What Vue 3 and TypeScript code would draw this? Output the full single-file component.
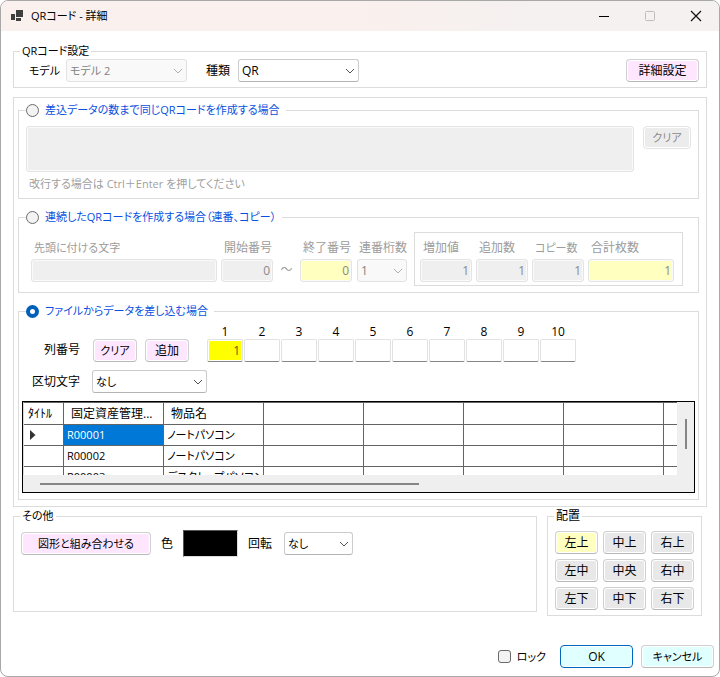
<script setup lang="ts">
import { ref } from 'vue'

interface CountField {
  id: string
  label: string
  value: string
  size: string
}

const mode = ref<string>('file')
const locked = ref<boolean>(false)
const position = ref<string>('左上')

const positions: string[] = ['左上', '中上', '右上', '左中', '中央', '右中', '左下', '中下', '右下']

const columnNumbers = ref<string[]>(['1', '', '', '', '', '', '', '', '', ''])

const countFields: CountField[] = [
  { id: 'step', label: '増加値', value: '1', size: 'short' },
  { id: 'extra', label: '追加数', value: '1', size: 'short' },
  { id: 'copies', label: 'コピー数', value: '1', size: 'short kana' },
  { id: 'total', label: '合計枚数', value: '1', size: 'total yellow' },
]

const headers: string[] = ['固定資産管理...', '物品名', '', '', '', '', '']
const rows: string[][] = [
  ['R00001', 'ノートパソコン', '', '', '', '', ''],
  ['R00002', 'ノートパソコン', '', '', '', '', ''],
  ['R00003', 'デスクトップパソコン', '', '', '', '', ''],
]
</script>

<template>
  <div class="window">
    <header class="titlebar">
      <svg class="app-icon" width="13" height="12" viewBox="0 0 13 12" aria-hidden="true">
        <path d="M5 0h7v7H5zM0 4h4v6H0zM5 8h5v3H5z" fill="#3f3f3f" />
      </svg>
      <h1>QRコード - 詳細</h1>
      <button class="caption" type="button" aria-label="最小化">
        <svg width="12" height="12" viewBox="0 0 12 12"><path d="M1 6.500h10" stroke="#000" /></svg>
      </button>
      <button class="caption" type="button" aria-label="最大化" disabled>
        <svg width="12" height="12" viewBox="0 0 12 12"><rect x="1.5" y="1.5" width="9" height="9" rx="1" fill="none" stroke="#bdbdbd" /></svg>
      </button>
      <button class="caption" type="button" aria-label="閉じる">
        <svg width="12" height="12" viewBox="0 0 12 12"><path d="M1 1l10 10M11 1L1 11" stroke="#111" stroke-width="1.2" /></svg>
      </button>
    </header>

    <main class="content">
      <fieldset class="group settings">
        <legend>QRコード設定</legend>
        <div class="settings-row">
          <label for="model" class="kana">モデル</label>
          <div class="select model kana">
            <select id="model" disabled><option>モデル 2</option></select>
            <svg width="10" height="6" viewBox="0 0 10 6"><path d="M1 1l4 4 4-4" /></svg>
          </div>
          <label for="kind" class="kind-label">種類</label>
          <div class="select model">
            <select id="kind"><option>QR</option></select>
            <svg width="10" height="6" viewBox="0 0 10 6"><path d="M1 1l4 4 4-4" /></svg>
          </div>
          <button type="button" class="btn pink detail">詳細設定</button>
        </div>
      </fieldset>

      <section class="panel">
        <fieldset class="group same">
          <legend class="choice">
            <input id="mode-same" v-model="mode" type="radio" name="mode" value="same" />
            <label for="mode-same">差込データの数まで同じQRコードを作成する場合</label>
          </legend>
          <div class="same-row">
            <textarea disabled aria-label="差込データ"></textarea>
            <button type="button" class="btn clear kana" disabled>クリア</button>
          </div>
          <p class="hint kana">改行する場合は Ctrl＋Enter を押してください</p>
        </fieldset>

        <fieldset class="group serial">
          <legend class="choice">
            <input id="mode-serial" v-model="mode" type="radio" name="mode" value="serial" />
            <label for="mode-serial">連続したQRコードを作成する場合（連番、コピー）</label>
          </legend>
          <div class="serial-row">
            <div class="field prefix kana">
              <label for="prefix">先頭に付ける文字</label>
              <input id="prefix" type="text" disabled />
            </div>
            <div class="field short">
              <label for="start">開始番号</label>
              <input id="start" type="text" value="0" disabled />
            </div>
            <span class="tilde">～</span>
            <div class="field short yellow">
              <label for="end">終了番号</label>
              <input id="end" type="text" value="0" disabled />
            </div>
            <div class="field digits">
              <label for="digits">連番桁数</label>
              <div class="select">
                <select id="digits" disabled><option>1</option></select>
                <svg width="10" height="6" viewBox="0 0 10 6"><path d="M1 1l4 4 4-4" /></svg>
              </div>
            </div>
            <div class="counts">
              <div v-for="f in countFields" :key="f.id" class="field" :class="f.size">
                <label :for="f.id">{{ f.label }}</label>
                <input :id="f.id" type="text" :value="f.value" disabled />
              </div>
            </div>
          </div>
        </fieldset>

        <fieldset class="group file">
          <legend class="choice">
            <input id="mode-file" v-model="mode" type="radio" name="mode" value="file" />
            <label for="mode-file">ファイルからデータを差し込む場合</label>
          </legend>
          <div class="columns-row">
            <span class="row-name">列番号</span>
            <button type="button" class="btn pink small kana">クリア</button>
            <button type="button" class="btn pink small">追加</button>
            <div class="numbers">
              <label v-for="(_, i) in columnNumbers" :key="i" class="number">
                <span>{{ i + 1 }}</span>
                <input v-model="columnNumbers[i]" type="text" :class="{ filled: columnNumbers[i] !== '' }" />
              </label>
            </div>
          </div>
          <div class="delimiter-row">
            <label for="delimiter" class="row-name">区切文字</label>
            <div class="select delimiter kana">
              <select id="delimiter"><option>なし</option></select>
              <svg width="10" height="6" viewBox="0 0 10 6"><path d="M1 1l4 4 4-4" /></svg>
            </div>
          </div>
          <div class="grid-box">
            <div class="grid-view">
              <table>
                <colgroup>
                  <col class="col-title" />
                  <col v-for="n in headers.length" :key="n" class="col-data" />
                </colgroup>
                <thead>
                  <tr>
                    <th class="corner">ﾀｲﾄﾙ</th>
                    <th v-for="(h, i) in headers" :key="i">{{ h }}</th>
                  </tr>
                </thead>
                <tbody>
                  <tr v-for="(row, r) in rows" :key="r">
                    <td class="marker">
                      <svg v-if="r === 0" width="6" height="10" viewBox="0 0 6 10"><path d="M0 0l5.500 5L0 10z" fill="#333" /></svg>
                    </td>
                    <td v-for="(cell, c) in row" :key="c" :class="{ selected: r === 0 && c === 0 }">{{ cell }}</td>
                  </tr>
                </tbody>
              </table>
            </div>
            <div class="bar-v"><i></i></div>
            <div class="bar-h"><i></i></div>
          </div>
        </fieldset>
      </section>

      <div class="bottom">
        <fieldset class="group other">
          <legend>その他</legend>
          <div class="other-row">
            <button type="button" class="btn pink combine kana">図形と組み合わせる</button>
            <label for="color">色</label>
            <button id="color" type="button" class="swatch" aria-label="色"></button>
            <label for="rotate">回転</label>
            <div class="select rotate kana">
              <select id="rotate"><option>なし</option></select>
              <svg width="10" height="6" viewBox="0 0 10 6"><path d="M1 1l4 4 4-4" /></svg>
            </div>
          </div>
        </fieldset>

        <fieldset class="group place">
          <legend class="wide">配置</legend>
          <div class="place-grid">
            <button
              v-for="p in positions"
              :key="p"
              type="button"
              class="btn gray"
              :class="{ active: p === position }"
              @click="position = p"
            >{{ p }}</button>
          </div>
        </fieldset>
      </div>
    </main>

    <footer class="footer">
      <input id="lock" v-model="locked" type="checkbox" />
      <label for="lock" class="kana">ロック</label>
      <button type="button" class="btn cyan ok">OK</button>
      <button type="button" class="btn cyan kana">キャンセル</button>
    </footer>
  </div>
</template>

<style>
body {
  margin: 0;
  background: #fff;
}
</style>

<style scoped>
* {
  box-sizing: border-box;
}

.window {
  display: flex;
  flex-direction: column;
  min-height: 100vh;
  border: 1px solid #a8a8a8;
  border-radius: 8px;
  overflow: hidden;
  background: #fff;
  color: #000;
  font-family: "Open Sans", "Noto Sans CJK JP", sans-serif;
  font-size: 12px;
  line-height: 16px;
  font-feature-settings: "palt";
  white-space: nowrap;
}

button,
input,
select,
textarea {
  margin: 0;
  color: inherit;
  font: inherit;
  font-feature-settings: inherit;
}

.kana {
  font-size: 11px;
}

.titlebar {
  display: flex;
  align-items: center;
  height: 30px;
  padding-left: 10px;
  background: linear-gradient(90deg, #faf0ed 0%, #faf0ed 50%, #f4f1f0 75%, #f4f1f0 100%);
}

.app-icon {
  margin-right: 7px;
}

h1 {
  flex: 1;
  margin: 0;
  font-size: 11px;
  font-weight: 400;
}

.caption {
  display: grid;
  place-items: center;
  width: 46px;
  height: 28px;
  padding: 0;
  border: 0;
  background: none;
}

.content {
  padding: 13px 12px 0;
}

.group {
  min-width: 0;
  margin: 0;
  padding: 0;
  border: 1px solid #dcdcdc;
}

legend {
  height: 14px;
  margin-left: 6px;
  padding: 0 2px;
  font-size: 11px;
  line-height: 14px;
}

legend.wide {
  font-size: 12px;
}

.settings-row {
  display: flex;
  align-items: center;
  padding: 1px 7px 5px 15px;
}

.settings-row label {
  width: 37px;
}

.settings-row .kind-label {
  width: 32px;
  margin-left: 19px;
}

.model {
  width: 121px;
}

.detail {
  width: 73px;
  margin-left: auto;
}

.select {
  display: grid;
  align-items: center;
  height: 23px;
}

.select select {
  grid-area: 1 / 1;
  width: 100%;
  height: 23px;
  padding: 0 20px 0 3px;
  border: 1px solid #ccc;
  border-bottom-color: #b4b4b4;
  border-radius: 3px;
  background: #fff;
  appearance: none;
}

.select svg {
  grid-area: 1 / 1;
  justify-self: end;
  margin-right: 4px;
  fill: none;
  stroke: #505050;
  pointer-events: none;
}

.select select:disabled {
  border-color: #e2e2e2;
  background: #f9f9f9;
  color: #838383;
  opacity: 1;
}

.select select:disabled + svg {
  stroke: #b0b0b0;
}

.btn {
  height: 23px;
  padding: 0;
  border: 1px solid #d0d0d0;
  border-bottom-color: #b8b8b8;
  border-radius: 4px;
  background: #e8e8e8;
  box-shadow: inset 0 0 0 1px #fff;
  text-align: center;
}

.btn.pink {
  background: #ffe6ff;
}

.btn.cyan {
  width: 73px;
  background: #e0ffff;
}

.btn.active {
  background: #ffffc0;
}

.btn:disabled {
  border-color: #e4e4e4;
  background: #ececec;
  color: #8a8a8a;
}

.btn.ok {
  border-color: #0067c0;
}

.panel {
  display: flex;
  flex-direction: column;
  gap: 11px;
  margin-top: 9px;
  padding: 5px 7px 6px 4px;
  border: 1px solid #dcdcdc;
}

.choice {
  display: flex;
  align-items: center;
  gap: 6px;
  margin-left: 7px;
  padding: 0 6px 0 0;
  color: #0a50e0;
}

input[type="radio"] {
  width: 13px;
  height: 13px;
  border: 1px solid #6a6a6a;
  border-radius: 50%;
  background: #f3f3f3;
  appearance: none;
}

input[type="radio"]:checked {
  border: 4px solid #005fb8;
  background: #fff;
}

.same-row {
  display: flex;
  align-items: flex-start;
  gap: 9px;
  padding: 9px 7px 0;
}

textarea {
  flex: 1;
  height: 46px;
  border: 1px solid #e4e4e4;
  border-radius: 3px;
  background: #efefef;
  resize: none;
  box-shadow: inset 0 0 0 1px #fafafa;
}

.clear {
  width: 48px;
}

.hint {
  margin: 4px 0 6px 10px;
  color: #a0a0a0;
}

.serial-row {
  display: flex;
  align-items: flex-end;
  gap: 4px;
  padding: 8px 15px 6px 12px;
  color: #9c9c9c;
}

.field {
  display: flex;
  flex-direction: column;
  gap: 3px;
}

.field label {
  padding-left: 3px;
}

.field input {
  width: 100%;
  height: 23px;
  padding: 0 2px;
  border: 1px solid #e4e4e4;
  border-radius: 3px;
  background: #efefef;
  box-shadow: inset 0 0 0 1px #fafafa;
  color: #8a8a8a;
  font-size: 12px;
  text-align: right;
}

.field.yellow input {
  background: #ffffc0;
}

.serial-row > .field {
  margin-bottom: 4px;
}

.prefix {
  flex: 1;
}

.short {
  width: 52px;
}

.digits {
  width: 50px;
  margin-left: 1px;
}

.digits label {
  padding-left: 2px;
}

.total {
  width: 86px;
}

.tilde {
  width: 19px;
  margin-bottom: 8px;
  text-align: center;
}

.counts {
  display: flex;
  gap: 4px;
  margin-left: 3px;
  padding: 7px 8px 3px 5px;
  border: 1px solid #dcdcdc;
}

.columns-row {
  display: flex;
  align-items: flex-end;
  gap: 8px;
  padding: 7px 0 0 13px;
}

.row-name {
  width: 48px;
  text-align: right;
}

.columns-row .row-name {
  margin-bottom: 4px;
}

.small {
  width: 44px;
}

.columns-row .row-name + .small {
  margin-left: 5px;
}

.numbers {
  display: flex;
  gap: 1px;
  margin-left: 10px;
}

.number {
  display: flex;
  flex-direction: column;
  width: 36px;
  line-height: 14px;
  text-align: center;
}

.number input {
  width: 100%;
  height: 23px;
  padding: 0 2px;
  border: 1px solid #e2e2e2;
  border-bottom-color: #868686;
  border-radius: 2px;
  background: #fff;
  box-shadow: inset 0 0 0 1px #fff;
  text-align: right;
}

.number .filled {
  background: #ff0;
  color: #6b5a00;
}

.delimiter-row {
  display: flex;
  align-items: center;
  gap: 12px;
  padding: 8px 0 8px 13px;
}

.delimiter {
  width: 115px;
}

.grid-box {
  display: grid;
  grid-template-columns: minmax(0, 1fr) 17px;
  grid-template-rows: 73px 17px;
  margin: 0 3px 6px;
  border: 1px solid #000;
  background: #efefef;
}

.grid-view {
  overflow: hidden;
  background: #fff;
  border-top: 1px solid #646464;
  border-left: 1px solid #d8d8d8;
}

table {
  width: 740px;
  border-collapse: separate;
  border-spacing: 0;
  table-layout: fixed;
}

.col-title {
  width: 40px;
}

.col-data {
  width: 100px;
}

th,
td {
  height: 21px;
  padding: 0 3px;
  border-right: 1px solid #646464;
  border-bottom: 1px solid #646464;
  font-size: 11px;
  font-weight: 400;
  line-height: 20px;
  text-align: left;
  overflow: hidden;
}

th {
  height: 22px;
  padding-left: 7px;
  font-size: 12px;
}

.corner {
  padding: 0 4px;
}

.marker {
  padding-left: 6px;
}

.marker svg {
  display: block;
}

.selected {
  background: #0078d7;
  color: #fff;
}

.bar-v,
.bar-h {
  display: flex;
}

.bar-v i {
  width: 2px;
  height: 30px;
  margin: 17px 0 0 8px;
  background: #868686;
}

.bar-h i {
  width: 58%;
  height: 2px;
  margin: 8px 0 0 17px;
  background: #868686;
}

.bottom {
  display: flex;
  align-items: flex-start;
  gap: 10px;
  margin-top: 2px;
}

.other {
  flex: 1;
  min-height: 103px;
}

.other-row {
  display: flex;
  align-items: center;
  gap: 10px;
  padding: 7px 0 0 7px;
}

.combine {
  width: 130px;
}

.swatch {
  width: 55px;
  height: 27px;
  padding: 0;
  border: 1px solid #555;
  border-right-color: #ddd;
  border-bottom-color: #ddd;
  background: #000;
}

.rotate {
  width: 69px;
  margin-left: 2px;
}

.place {
  margin-right: 5px;
}

.place-grid {
  display: grid;
  grid-template-columns: repeat(3, 43px);
  gap: 5px;
  padding: 8px 7px 5px;
}

.footer {
  display: flex;
  align-items: center;
  margin-top: auto;
  padding: 28px 5px 8px;
}

.footer > input {
  width: 13px;
  height: 13px;
  margin: 0 6px 0 auto;
  border: 1px solid #6a6a6a;
  border-radius: 3px;
  background: #f3f3f3;
  appearance: none;
}

.footer > input:checked {
  background: #005fb8;
}

.footer .ok {
  margin: 0 8px 0 14px;
}
</style>
